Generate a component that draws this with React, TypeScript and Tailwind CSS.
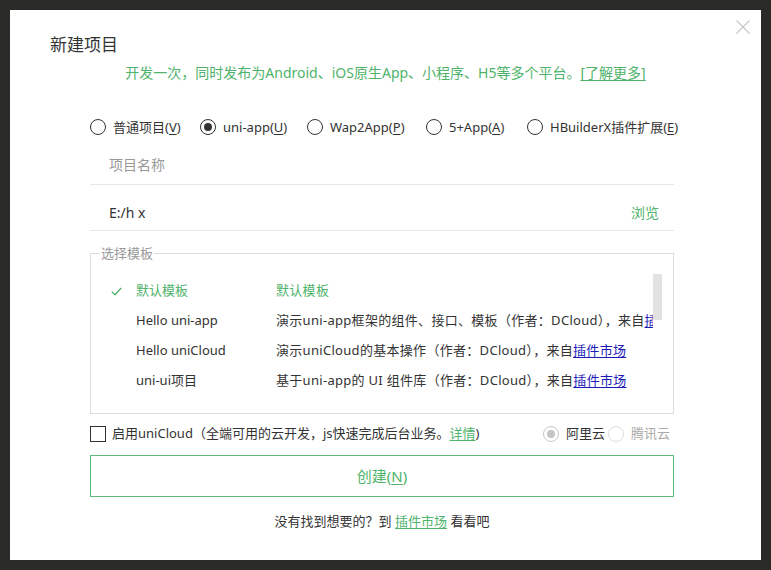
import React from "react";

const GREEN = "text-[#4fb36b]";

function Radio({ on, disabled }: { on?: boolean; disabled?: boolean }) {
  const ring = disabled ? (on ? "border-[#c8c8c8]" : "border-[#dddddd]") : "border-[#333]";
  const dot = disabled ? "bg-[#c4c4c4]" : "bg-[#333]";
  return (
    <span className={`flex h-[16px] w-[16px] shrink-0 items-center justify-center rounded-full border ${ring}`}>
      {on && <span className={`h-[8px] w-[8px] rounded-full ${dot}`} />}
    </span>
  );
}

function Hotkey({ label, k }: { label: string; k: string }) {
  return (
    <>
      {label}(<span className="underline underline-offset-2">{k}</span>)
    </>
  );
}

const kinds = [
  { label: "普通项目", k: "V", w: "w-[110px]" },
  { label: "uni-app", k: "U", w: "w-[107px]", on: true },
  { label: "Wap2App", k: "P", w: "w-[119px]" },
  { label: "5+App", k: "A", w: "w-[101px]" },
  { label: "HBuilderX插件扩展", k: "E", w: "" },
];

const templates = [
  { name: "默认模板", desc: "默认模板", on: true },
  { name: "Hello uni-app", desc: "演示uni-app框架的组件、接口、模板（作者：DCloud），来自" },
  { name: "Hello uniCloud", desc: "演示uniCloud的基本操作（作者：DCloud），来自" },
  { name: "uni-ui项目", desc: "基于uni-app的 UI 组件库（作者：DCloud），来自" },
];

export default function App() {
  return (
    <div
      className="h-[570px] w-[771px] bg-[#2a2a26] p-[10px] text-[13px] text-[#333]"
      style={{ fontFamily: '"Noto Sans", "Noto Sans CJK SC", sans-serif' }}
    >
      <div className="relative h-full w-full bg-white">
        <svg className="absolute right-[11px] top-[10px]" width="14" height="14" viewBox="0 0 14 14">
          <path d="M0.5 0.5 L13.5 13.5 M13.5 0.5 L0.5 13.5" stroke="#c6c6c6" strokeWidth="1.1" fill="none" />
        </svg>

        <div className="pl-[40px] pt-[23px] text-[17px] leading-[24px]">新建项目</div>
        <div className={`mt-[6px] text-center text-[14px] leading-[20px] ${GREEN}`}>
          开发一次，同时发布为Android、iOS原生App、小程序、H5等多个平台。
          <span className="underline underline-offset-2">[了解更多]</span>
        </div>

        <div className="ml-[80px] w-[584px]">
          <div className="mt-[34px] flex h-[20px] items-center">
            {kinds.map((r) => (
              <div key={r.k} className={`flex shrink-0 items-center gap-[7px] whitespace-nowrap ${r.w}`}>
                <Radio on={r.on} />
                <span className="leading-[20px]">
                  <Hotkey label={r.label} k={r.k} />
                </span>
              </div>
            ))}
          </div>

          <div className="mt-[8px] flex h-[40px] items-center border-b border-[#e6e6e6] pl-[19px] text-[14px] text-[#999]">
            项目名称
          </div>
          <div className="flex h-[46px] items-center justify-between border-b border-[#e6e6e6] pl-[19px] pr-[15px] pt-[9px] text-[14px]">
            <span>E:/h x</span>
            <span className={GREEN}>浏览</span>
          </div>

          <fieldset className="mt-[13px] h-[170px] min-w-0 border border-[#dcdcdc] pl-[9px]">
            <legend className="px-[1px] text-[13px] leading-[18px] text-[#999]">选择模板</legend>
            <div className="-ml-[9px] mt-[14px] flex pr-[11px]">
              <div className="min-w-0 flex-1 overflow-hidden">
                {templates.map((t) => (
                  <div key={t.name} className={`flex h-[30px] items-center whitespace-nowrap ${t.on ? GREEN : ""}`}>
                    <span className="flex w-[45px] shrink-0 justify-end pr-[14px]">
                      {t.on && (
                        <svg width="11" height="9" viewBox="0 0 11 9">
                          <path d="M0.8 4.6 L4 7.8 L10.2 1" stroke="#4fb36b" strokeWidth="1.3" fill="none" />
                        </svg>
                      )}
                    </span>
                    <span className="w-[140px] shrink-0">{t.name}</span>
                    <span className="tracking-[0.3px]">
                      {t.desc}
                      {!t.on && <span className="text-[#1a1ab8] underline underline-offset-2">插件市场</span>}
                    </span>
                  </div>
                ))}
              </div>
              <div className="-mt-[2px] h-[46px] w-[9px] shrink-0 bg-[#e2e2e2]" />
            </div>
          </fieldset>

          <div className="mt-[10px] flex h-[20px] items-center whitespace-nowrap pr-[4px]">
            <span className="h-[16px] w-[16px] shrink-0 border border-[#333]" />
            <span className="ml-[6px]">
              启用uniCloud（全端可用的云开发，js快速完成后台业务。
              <span className={`${GREEN} underline underline-offset-2`}>详情</span>)
            </span>
            <span className="ml-auto flex items-center gap-[7px]">
              <Radio on disabled />
              <span>阿里云</span>
            </span>
            <span className="ml-[3px] flex items-center gap-[7px] text-[#aaa]">
              <Radio disabled />
              <span>腾讯云</span>
            </span>
          </div>

          <div className={`mt-[11px] flex h-[42px] items-center justify-center border border-[#5cba78] text-[15px] ${GREEN}`}>
            <Hotkey label="创建" k="N" />
          </div>

          <div className="mt-[14px] text-center leading-[20px]">
            没有找到想要的？到 <span className={`${GREEN} underline underline-offset-2`}>插件市场</span> 看看吧
          </div>
        </div>
      </div>
    </div>
  );
}
